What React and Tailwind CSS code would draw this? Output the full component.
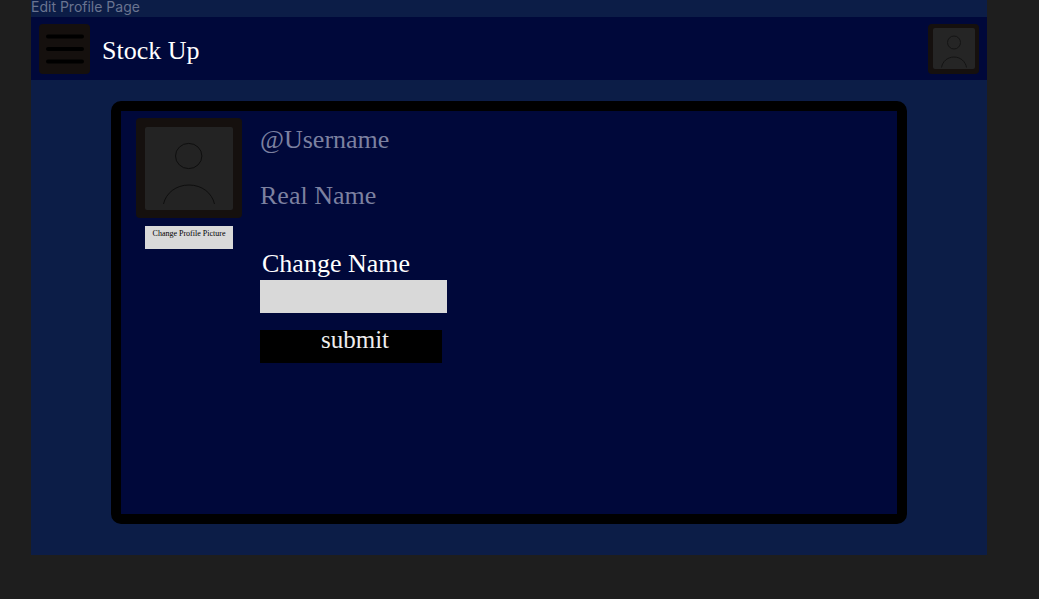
import React from "react";

function AvatarLarge() {
  return (
    <svg viewBox="0 0 88 83" className="block h-[83px] w-[88px] rounded-xs bg-[#232323]" role="img" aria-label="Profile picture">
      <g fill="none" stroke="#0e0e0e" strokeWidth="1">
        <ellipse cx="43.7" cy="29" rx="13.2" ry="12.6" />
        <path d="M18.500 77C21 66 31 58 44 58C57 58 67 66 69.500 77" />
      </g>
    </svg>
  );
}

function AvatarSmall() {
  return (
    <svg viewBox="0 0 42 41" className="block h-[41px] w-[42px] rounded-xs bg-[#252525]" aria-hidden="true">
      <g fill="none" stroke="#141414" strokeWidth="1">
        <circle cx="21" cy="14.500" r="6.500" />
        <path d="M8.500 39.500C9.500 33.500 14.500 29 21 29C27.500 29 32.500 33.500 33.500 39.500" />
      </g>
    </svg>
  );
}

function Header() {
  return (
    <header className="flex h-[63px] items-center bg-[#00083a] px-2">
      <button type="button" aria-label="Menu" className="flex h-[50px] w-[51px] items-center justify-center rounded-sm bg-[#15100e]">
        <svg viewBox="0 0 38 30" className="h-[30px] w-[38px]" aria-hidden="true">
          <path d="M2 2.500H36M2 15H36M2 27.500H36" stroke="#000" strokeWidth="4" strokeLinecap="round" />
        </svg>
      </button>
      <h1 className="ml-3 pt-1 text-[26px] leading-8 text-white">Stock Up</h1>
      <button type="button" aria-label="Profile" className="ml-auto flex h-[50px] w-[51px] items-center justify-center rounded-sm bg-[#15100e]">
        <AvatarSmall />
      </button>
    </header>
  );
}

export default function App() {
  return (
    <div className="flex min-h-screen flex-col bg-[#1e1e1e] pb-11 pl-[31px] pr-[52px] font-['Liberation_Serif',serif]">
      <div className="flex flex-1 flex-col bg-[#0c1d47]">
        <p className="h-[17px] font-['Inter',sans-serif] text-sm leading-[14px] text-[#6a7490]">Edit Profile Page</p>
        <Header />
        <main className="flex flex-1 flex-col px-20 pb-[31px] pt-[21px]">
          <section className="flex flex-1 items-start gap-[18px] rounded-[10px] border-10 border-black bg-[#00083a] pl-[15px]">
            <div className="mt-[7px] flex flex-col items-center gap-2">
              <div className="flex h-[100px] w-[106px] items-center justify-center rounded-sm bg-[#15100e]">
                <AvatarLarge />
              </div>
              <button type="button" className="flex h-[23px] w-[88px] items-start justify-center whitespace-nowrap bg-[#d9d9d9] text-[8px] leading-4 text-black">
                Change Profile Picture
              </button>
            </div>
            <div className="pt-[13px] text-[26px] leading-8">
              <p className="text-[#7c81a0]">@Username</p>
              <p className="mt-6 text-[#7c81a0]">Real Name</p>
              <form className="mt-9 flex flex-col items-start" onSubmit={(e) => e.preventDefault()}>
                <label htmlFor="name" className="pl-0.5 text-white">Change Name</label>
                <input id="name" type="text" className="h-[33px] w-[187px] bg-[#d9d9d9] px-2 text-xl text-black" />
                <button type="submit" className="mt-[17px] flex h-[33px] w-[182px] items-start justify-center bg-black pl-2 text-[25px] leading-5 text-[#eeeeee]">
                  submit
                </button>
              </form>
            </div>
          </section>
        </main>
      </div>
    </div>
  );
}
